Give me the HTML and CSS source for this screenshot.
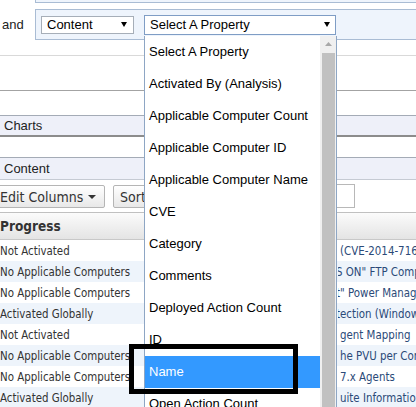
FILE: index.html
```html
<!DOCTYPE html>
<html lang="en">
<head>
  <meta charset="UTF-8">
  <title>Analysis Filter</title>
  <link rel="stylesheet" href="styles.css">
</head>

<body>

  <div class="prev-filter"></div>

  <div class="filter-row">
    <span class="and-label">and</span>

    <div class="filter-panel">
      <div class="select content-select">
        <span>Content</span>
        <svg class="arrow" width="6" height="5" viewBox="0 0 6 5"><polygon points="0,0 6,0 3,5" fill="#000"/></svg>
      </div>

      <div class="select property-select">
        <span>Select A Property</span>
        <svg class="arrow" width="6" height="5" viewBox="0 0 6 5"><polygon points="0,0 6,0 3,5" fill="#000"/></svg>

        <!-- open list of the select -->
        <div class="dropdown">
          <ul class="option-list">
            <li class="option">Select A Property</li>
            <li class="option">Activated By (Analysis)</li>
            <li class="option">Applicable Computer Count</li>
            <li class="option">Applicable Computer ID</li>
            <li class="option">Applicable Computer Name</li>
            <li class="option">CVE</li>
            <li class="option">Category</li>
            <li class="option">Comments</li>
            <li class="option">Deployed Action Count</li>
            <li class="option">ID</li>
            <li class="option selected">Name</li>
            <li class="option">Open Action Count</li>
          </ul>

          <div class="scrollbar">
            <div class="scroll-up">
              <svg width="7" height="4" viewBox="0 0 7 4"><polygon points="0,4 7,4 3.5,0" fill="#a8a8a8"/></svg>
            </div>
            <div class="scroll-thumb"></div>
          </div>

          <div class="highlight-box"></div>
        </div>
      </div>
    </div>
  </div>

  <div class="rule-light"></div>
  <div class="rule-dark"></div>

  <div class="section-bar charts-bar">Charts</div>
  <div class="section-bar content-bar">Content</div>

  <div class="toolbar">
    <button class="btn edit-btn">Edit Columns
      <svg width="8" height="4" viewBox="0 0 8 4"><polygon points="0,0 8,0 4,4" fill="#333"/></svg>
    </button>
    <button class="btn sort-btn">Sort</button>
    <div class="search-box"></div>
  </div>

  <div class="grid-head">Progress</div>

  <div class="grid-body">
    <div class="grid-row"><span>Not Activated</span><span class="link">(CVE-2014-7169)</span></div>
    <div class="grid-row"><span>No Applicable Computers</span><span class="link cut">S ON" FTP Component</span></div>
    <div class="grid-row"><span>No Applicable Computers</span><span class="link cut">t" Power Management</span></div>
    <div class="grid-row"><span>Activated Globally</span><span class="link cut">tection (Windows)</span></div>
    <div class="grid-row"><span>Not Activated</span><span class="link">gent Mapping</span></div>
    <div class="grid-row"><span>No Applicable Computers</span><span class="link">he PVU per Core</span></div>
    <div class="grid-row"><span>No Applicable Computers</span><span class="link">7.x Agents</span></div>
    <div class="grid-row"><span>Activated Globally</span><span class="link">uite Information</span></div>
  </div>

</body>
</html>
```

FILE: styles.css
```css
/* Reset */
* {
  margin: 0;
  padding: 0;
  box-sizing: border-box;
}

body {
  width: 416px;
  height: 407px;
  overflow: hidden;
  background: #fff;
  font-family: "Liberation Sans", Arial, sans-serif;
  font-size: 13px;
  color: #222;
}

/* filter rows */
.prev-filter {
  margin-left: 35px;
  height: 3px;
  background: #eef4fc;
  border-left: 1px solid #a9bcd4;
  border-bottom: 1px solid #a9bcd4;
}

.filter-row {
  display: flex;
  margin-top: 6px;
  height: 31px;
}

.and-label {
  width: 35px;
  padding-left: 2px;
  align-self: center;
  color: #222;
}

.filter-panel {
  flex: 1;
  display: flex;
  align-items: center;
  gap: 10px;
  padding-left: 5px;
  background: #eef4fc;
  border: 1px solid #a9bcd4;
  border-right: 0;
}

.select {
  position: relative;
  display: flex;
  align-items: center;
  justify-content: space-between;
  background: #fff;
  color: #000;
  white-space: nowrap;
}

.content-select {
  width: 93px;
  height: 18px;
  padding: 0 6px 0 5px;
  border: 1px solid #a6aeb8;
}

.property-select {
  width: 192px;
  height: 20px;
  padding: 0 5px;
  border: 1px solid #7f9dc5;
}

/* open list */
.dropdown {
  position: absolute;
  left: -1px;
  top: 20px;
  width: 193px;
  height: 380px;
  display: flex;
  background: #fff;
  border: 1px solid #8ea6c4;
  border-top: 0;
  z-index: 5;
}

.option-list {
  flex: 1;
  list-style: none;
}

.option {
  height: 32px;
  line-height: 32px;
  padding-left: 4px;
  white-space: nowrap;
  color: #000;
}

.option.selected {
  background: #3399ff;
  color: #fff;
}

.scrollbar {
  width: 16px;
  display: flex;
  flex-direction: column;
  background: #f0f0f0;
}

.scroll-up {
  height: 17px;
  display: flex;
  align-items: center;
  justify-content: center;
}

.scroll-up svg {
  margin-left: 1px;
}

.scroll-thumb {
  flex: 1;
  margin: 0 1px 0 2px;
  background: #c1c1c1;
}

.highlight-box {
  position: absolute;
  left: -16px;
  top: 308px;
  width: 169px;
  height: 50px;
  border: 5px solid #000;
}

/* page sections */
.rule-light {
  height: 16px;
  border-bottom: 1px solid #d9d9d9;
}

.rule-dark {
  height: 35px;
  border-bottom: 1px solid #a3a3a3;
}

.section-bar {
  display: flex;
  align-items: center;
  padding-left: 4px;
  background: #eef0f9;
  color: #222;
}

.charts-bar {
  margin-top: 24px;
  height: 22px;
  border-top: 1px solid #a4abb6;
  border-bottom: 2px solid #8c8c8c;
}

.content-bar {
  margin-top: 20px;
  height: 23px;
  border-top: 1px solid #a4abb6;
  border-bottom: 1px solid #c5cad3;
}

.toolbar {
  height: 32px;
  display: flex;
  align-items: flex-start;
  gap: 8px;
  padding-top: 5px;
  padding-right: 61px;
}

.btn {
  height: 23px;
  display: flex;
  align-items: center;
  gap: 5px;
  border: 1px solid #b5b5b5;
  border-radius: 2px;
  background: linear-gradient(#ffffff, #e8e8e8);
  font-family: "DejaVu Sans Condensed", "DejaVu Sans", sans-serif;
  font-stretch: condensed;
  font-size: 14px;
  color: #333;
  white-space: nowrap;
}

.edit-btn {
  margin-left: -10px;
  width: 115px;
  padding: 0 0 0 9px;
}

.sort-btn {
  width: 80px;
  padding-left: 6px;
}

.search-box {
  margin-left: auto;
  margin-top: -1px;
  width: 120px;
  height: 24px;
  background: #fff;
  border: 1px solid #b8b8b8;
}

/* grid */
.grid-head {
  height: 28px;
  display: flex;
  align-items: center;
  border-top: 1px solid #c0c0c0;
  border-bottom: 1px solid #c8c8c8;
  background: linear-gradient(#fbfbfb, #e4e4e4);
  font-family: "DejaVu Sans Condensed", "DejaVu Sans", sans-serif;
  font-stretch: condensed;
  font-weight: bold;
  font-size: 13.5px;
  color: #333;
}

.grid-row {
  display: grid;
  grid-template-columns: 338px 1fr;
  align-items: center;
  height: 21px;
  overflow: hidden;
  white-space: nowrap;
  font-family: "DejaVu Sans Condensed", "DejaVu Sans", sans-serif;
  font-stretch: condensed;
  font-size: 11.4px;
  color: #333;
}

.grid-row:nth-child(even) {
  background: #eef4fb;
}

.link {
  padding-left: 2px;
  overflow: hidden;
  color: #2b4a78;
}

.link.cut {
  text-indent: -4px;
}
```
